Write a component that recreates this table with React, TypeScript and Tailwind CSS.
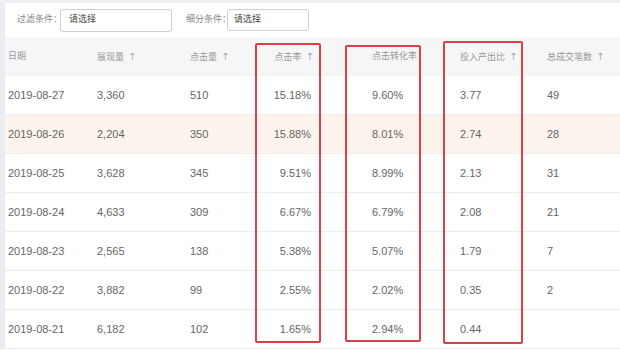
import React from 'react'

const font = { fontFamily: '"Liberation Sans", "Noto Sans CJK SC", sans-serif' }

type Row = { date: string; show: string; click: string; ctr: string; cvr: string; roi: string; deals: string }

const rows: Row[] = [
  { date: '2019-08-27', show: '3,360', click: '510', ctr: '15.18%', cvr: '9.60%', roi: '3.77', deals: '49' },
  { date: '2019-08-26', show: '2,204', click: '350', ctr: '15.88%', cvr: '8.01%', roi: '2.74', deals: '28' },
  { date: '2019-08-25', show: '3,628', click: '345', ctr: '9.51%', cvr: '8.99%', roi: '2.13', deals: '31' },
  { date: '2019-08-24', show: '4,633', click: '309', ctr: '6.67%', cvr: '6.79%', roi: '2.08', deals: '21' },
  { date: '2019-08-23', show: '2,565', click: '138', ctr: '5.38%', cvr: '5.07%', roi: '1.79', deals: '7' },
  { date: '2019-08-22', show: '3,882', click: '99', ctr: '2.55%', cvr: '2.02%', roi: '0.35', deals: '2' },
  { date: '2019-08-21', show: '6,182', click: '102', ctr: '1.65%', cvr: '2.94%', roi: '0.44', deals: '' },
]

const cols = 'grid grid-cols-[92px_93px_60px_70px_140px_87px_1fr] items-center whitespace-nowrap'

function Arrow() {
  return <span className="ml-[4px] text-[10px] text-[#aaa] font-['DejaVu_Sans']">↑</span>
}

export default function App() {
  return (
    <div className="relative w-[620px] h-[351px] overflow-hidden bg-white text-[11px]" style={font}>
      <div className="h-[3px] bg-[#eceff4]" />
      <div className="flex">
        <div className="w-[5px] shrink-0 bg-[#e9ecf1]" />
        <div className="flex-1">
          <div className="flex items-center h-[34px] text-[9px] text-[#888] whitespace-nowrap">
            <span className="ml-[12px] w-[43px]">过滤条件：</span>
            <div className="w-[112px] h-[23px] border border-[#cfcfcf] rounded-[3px] flex items-center pl-[8px] text-[#444]">
              请选择
            </div>
            <span className="ml-[14px] w-[41px]">细分条件：</span>
            <div className="w-[82px] h-[22px] border border-[#cfcfcf] rounded-[3px] flex items-center pl-[6px] text-[#444]">
              请选择
            </div>
          </div>
          <div className={`${cols} h-[39px] bg-[#f6f6f6] text-[#999] text-[9px]`}>
            <div className="pl-[3px]">日期</div>
            <div>展现量<Arrow /></div>
            <div>点击量<Arrow /></div>
            <div className="text-right pr-[6px]">点击率<Arrow /></div>
            <div className="pl-[52px]">点击转化率</div>
            <div>投入产出比<Arrow /></div>
            <div>总成交笔数<Arrow /></div>
          </div>
          {rows.map((r, i) => (
            <div
              key={r.date}
              className={`${cols} h-[39px] border-b border-[#ededed] text-[#666] ${i === 1 ? 'bg-[#fbf3ec]' : 'bg-white'}`}
            >
              <div className="pl-[3px]">{r.date}</div>
              <div>{r.show}</div>
              <div>{r.click}</div>
              <div className="text-right pr-[9px]">{r.ctr}</div>
              <div className="pl-[52px]">{r.cvr}</div>
              <div>{r.roi}</div>
              <div>{r.deals}</div>
            </div>
          ))}
        </div>
      </div>

      {/* red highlight boxes */}
      <div className="absolute left-[255px] top-[43px] w-[66px] h-[300px] border-2 border-[#d8414a] rounded-[2px]" />
      <div className="absolute left-[345px] top-[45px] w-[76px] h-[297px] border-2 border-[#d8414a] rounded-[2px]" />
      <div className="absolute left-[443px] top-[41px] w-[80px] h-[303px] border-2 border-[#d8414a] rounded-[2px]" />
    </div>
  )
}
